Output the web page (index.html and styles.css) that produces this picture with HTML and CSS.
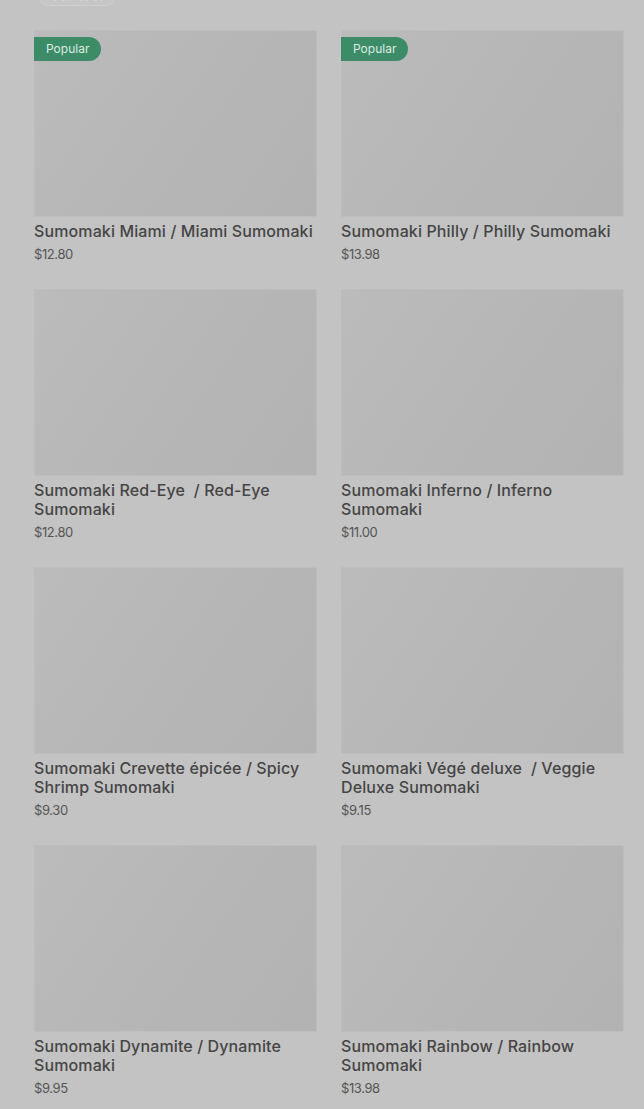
FILE: index.html
```html
<!DOCTYPE html>
<html lang="en">
<head>
<meta charset="utf-8">
<title>Sumomaki</title>
<link rel="stylesheet" href="styles.css">
</head>
<body>
<div class="page">
  <div class="top-chip">Voir tout</div>
  <div class="grid">
    <div class="card">
      <div class="thumb"><span class="badge">Popular</span></div>
      <div class="title">Sumomaki Miami / Miami Sumomaki</div>
      <div class="price">$12.80</div>
    </div>
    <div class="card">
      <div class="thumb"><span class="badge">Popular</span></div>
      <div class="title">Sumomaki Philly / Philly Sumomaki</div>
      <div class="price">$13.98</div>
    </div>
    <div class="card">
      <div class="thumb"></div>
      <div class="title">Sumomaki Red-Eye &nbsp;/ Red-Eye Sumomaki</div>
      <div class="price">$12.80</div>
    </div>
    <div class="card">
      <div class="thumb"></div>
      <div class="title">Sumomaki Inferno / Inferno Sumomaki</div>
      <div class="price">$11.00</div>
    </div>
    <div class="card">
      <div class="thumb"></div>
      <div class="title">Sumomaki Crevette épicée / Spicy Shrimp Sumomaki</div>
      <div class="price">$9.30</div>
    </div>
    <div class="card">
      <div class="thumb"></div>
      <div class="title">Sumomaki Végé deluxe &nbsp;/ Veggie Deluxe Sumomaki</div>
      <div class="price">$9.15</div>
    </div>
    <div class="card">
      <div class="thumb"></div>
      <div class="title">Sumomaki Dynamite / Dynamite Sumomaki</div>
      <div class="price">$9.95</div>
    </div>
    <div class="card">
      <div class="thumb"></div>
      <div class="title">Sumomaki Rainbow / Rainbow Sumomaki</div>
      <div class="price">$13.98</div>
    </div>
  </div>
</div>
</body>
</html>
```

FILE: styles.css
```css
html, body {
  margin: 0;
  padding: 0;
  background: #c3c3c3;
}
body {
  font-family: Inter, "Liberation Sans", sans-serif;
  color: #444444;
  overflow: hidden;
}
.page {
  padding: 0 20px 0 34px;
}
.top-chip {
  display: block;
  box-sizing: border-box;
  width: fit-content;
  margin: -21px 0 0 3px;
  height: 26px;
  padding: 9px 14px 0;
  line-height: 17px;
  border-radius: 13px;
  background: #c6c6c6;
  box-shadow: 0 1px 0 #d0d0d0;
  color: #d4d4d4;
  font-size: 13px;
  overflow: hidden;
}
.grid {
  display: grid;
  grid-template-columns: 283px 283px;
  column-gap: 24px;
  row-gap: 25px;
  margin-top: 25px;
}
.card {
  display: flex;
  flex-direction: column;
}
.thumb {
  position: relative;
  height: 187px;
  background: linear-gradient(125deg, #bbbbbb 0%, #b7b7b7 45%, #b2b2b2 100%);
  box-shadow: inset 0 0 0 1px #bdbdbd;
  margin-bottom: 5px;
}
.badge {
  position: absolute;
  left: 0;
  top: 7px;
  height: 24px;
  line-height: 24px;
  padding: 0 12px 0 12px;
  background: #3d8c68;
  color: #dcebe3;
  font-size: 12px;
  border-radius: 0 12px 12px 0;
}
.title {
  font-size: 16px;
  font-weight: 500;
  line-height: 19px;
  color: #454545;
  letter-spacing: 0.12px;
}
.price {
  margin-top: 3px;
  font-size: 13px;
  line-height: 20px;
  color: #555555;
  letter-spacing: -0.4px;
}
```
